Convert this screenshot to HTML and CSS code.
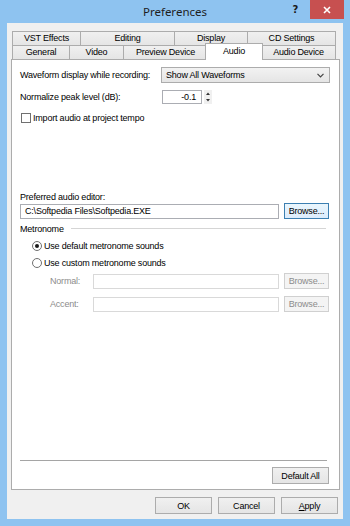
FILE: index.html
```html
<!DOCTYPE html>
<html lang="en">
<head>
  <meta charset="UTF-8">
  <title>Preferences</title>
  <link rel="stylesheet" href="styles.css">
</head>
<body>
  <div class="window">
    <div class="titlebar">
      <span></span>
      <div class="title">Preferences</div>
      <div class="controls">
        <span class="help">?</span>
        <span class="close">
          <svg width="8" height="8" viewBox="0 0 8 8"><path d="M1 1L7 7M7 1L1 7" stroke="#fff" stroke-width="1.6"/></svg>
        </span>
      </div>
    </div>

    <div class="client">
      <div class="tabs">
        <div class="tab-row row-back">
          <div class="tab">VST Effects</div>
          <div class="tab">Editing</div>
          <div class="tab">Display</div>
          <div class="tab">CD Settings</div>
        </div>
        <div class="tab-row row-front">
          <div class="tab">General</div>
          <div class="tab">Video</div>
          <div class="tab">Preview Device</div>
          <div class="tab active">Audio</div>
          <div class="tab">Audio Device</div>
        </div>
      </div>

      <div class="page">
        <div class="field-row">
          <label>Waveform display while recording:</label>
          <div class="combo">
            <span>Show All Waveforms</span>
            <svg width="7" height="5" viewBox="0 0 7 5"><path d="M0.5 0.8L3.5 3.8L6.5 0.8" fill="none" stroke="#444" stroke-width="1.2"/></svg>
          </div>
        </div>
        <div class="field-row spin-row">
          <label>Normalize peak level (dB):</label>
          <div class="spin">
            <div class="spin-input">-0.1</div>
            <div class="spin-arrows">
              <svg width="8" height="14" viewBox="0 0 8 14"><path d="M2 5L4 2.5L6 5Z M2 9L4 11.5L6 9Z" fill="#333"/></svg>
            </div>
          </div>
        </div>
        <div class="check-row">
          <span class="checkbox"></span>
          <span>Import audio at project tempo</span>
        </div>

        <div class="editor-label">Preferred audio editor:</div>
        <div class="path-row">
          <div class="textbox">C:\Softpedia Files\Softpedia.EXE</div>
          <button class="btn focused">Browse...</button>
        </div>

        <div class="group-head">
          <span>Metronome</span>
          <span class="group-line"></span>
        </div>
        <div class="radio-row first">
          <span class="radio checked"></span>
          <span>Use default metronome sounds</span>
        </div>
        <div class="radio-row">
          <span class="radio"></span>
          <span>Use custom metronome sounds</span>
        </div>
        <div class="sound-row">
          <span class="sound-label">Normal:</span>
          <div class="textbox disabled"></div>
          <button class="btn disabled">Browse...</button>
        </div>
        <div class="sound-row second">
          <span class="sound-label">Accent:</span>
          <div class="textbox disabled"></div>
          <button class="btn disabled">Browse...</button>
        </div>

        <div class="page-footer">
          <div class="separator"></div>
          <button class="btn wide">Default All</button>
        </div>
      </div>

      <div class="dialog-buttons">
        <button class="btn wide">OK</button>
        <button class="btn wide">Cancel</button>
        <button class="btn wide"><u>A</u>pply</button>
      </div>
    </div>
  </div>
</body>
</html>
```

FILE: styles.css
```css
body {
  margin: 0;
  font-family: 'Liberation Sans', Arial, sans-serif;
  font-size: 9px;
  letter-spacing: -0.2px;
  color: #000;
}
.window {
  width: 350px;
  height: 526px;
  box-sizing: border-box;
  padding: 0 7px 7px 7px;
  background: #8ec3f0;
  display: flex;
  flex-direction: column;
}
.titlebar {
  height: 23px;
  display: grid;
  grid-template-columns: 1fr auto 1fr;
  align-items: start;
}
.title {
  font-family: 'Noto Sans', sans-serif;
  font-size: 11.5px;
  letter-spacing: 0;
  color: #1e1e1e;
  line-height: 23px;
}
.controls {
  justify-self: end;
  display: flex;
  align-items: start;
  gap: 12px;
  margin-right: -1px;
}
.help {
  font-family: 'DejaVu Sans', sans-serif;
  font-weight: bold;
  font-size: 10px;
  line-height: 19px;
  color: #1a1a1a;
}
.close {
  width: 34px;
  height: 19px;
  background: #c75050;
  display: flex;
  align-items: center;
  justify-content: center;
}
.client {
  flex: 1;
  background: #f0f0f0;
  padding: 8px 3px 5px 4px;
  display: flex;
  flex-direction: column;
}
.tabs {
  margin: 0 4px 0 1px;
}
.tab-row {
  display: grid;
  height: 14px;
}
.row-back {
  grid-template-columns: 68px 94px 73px 1fr;
}
.row-front {
  grid-template-columns: 57px 54px 84px 54px 1fr;
}
.tab {
  border: 1px solid #acacac;
  border-bottom: none;
  margin-right: -1px;
  background: linear-gradient(#f0f0f0, #e5e5e5);
  text-align: center;
  line-height: 13px;
  white-space: nowrap;
}
.tab:last-child {
  margin-right: 0;
}
.tab.active {
  background: #fff;
  margin: -2px -2px -1px -2px;
  line-height: 15px;
  position: relative;
  z-index: 1;
}
.page {
  flex: 1;
  background: #fff;
  border: 1px solid #acacac;
  padding: 7px 10px 5px 8px;
  display: flex;
  flex-direction: column;
}
.field-row {
  display: grid;
  grid-template-columns: 141px 1fr;
  align-items: center;
  height: 16px;
}
.combo {
  height: 16px;
  box-sizing: border-box;
  border: 1px solid #acacac;
  background: linear-gradient(#f2f2f2, #e5e5e5);
  display: flex;
  align-items: center;
  justify-content: space-between;
  padding: 0 5px 0 4px;
  margin-right: -1px;
}
.spin-row {
  margin-top: 7px;
  height: 14px;
}
.spin {
  display: flex;
  gap: 2px;
  margin-left: 1px;
}
.spin-input {
  width: 40px;
  height: 14px;
  box-sizing: border-box;
  border: 1px solid #abadb3;
  text-align: right;
  padding-right: 5px;
  line-height: 12px;
}
.spin-arrows {
  width: 8px;
  height: 14px;
  background: #f0f0f0;
}
.check-row {
  margin-top: 8px;
  display: flex;
  align-items: center;
  gap: 2px;
  height: 11px;
  padding-left: 1px;
}
.checkbox {
  width: 10px;
  height: 10px;
  box-sizing: border-box;
  border: 1px solid #707070;
  background: #fff;
}
.editor-label {
  margin-top: 69px;
  line-height: 11px;
}
.path-row {
  margin-top: 0;
  display: flex;
  align-items: center;
  gap: 5px;
  height: 16px;
}
.textbox {
  flex: 1;
  height: 15px;
  box-sizing: border-box;
  border: 1px solid #abadb3;
  background: #fff;
  padding-left: 4px;
  line-height: 13px;
  white-space: nowrap;
}
.textbox.disabled {
  border-color: #d9d9d9;
}
.btn {
  font: inherit;
  letter-spacing: inherit;
  color: #000;
  width: 45px;
  height: 16px;
  padding: 0;
  border: 1px solid #acacac;
  background: linear-gradient(#f0f0f0, #e5e5e5);
  flex-shrink: 0;
}
.btn.wide {
  width: 57px;
  height: 17px;
}
.btn.focused {
  border-color: #3c7fb1;
  background: linear-gradient(#eaf6fd, #dcecfc);
}
.btn.disabled {
  border-color: #d0d0d0;
  background: #f4f4f4;
  color: #8c8c8c;
}
.group-head {
  margin-top: 4px;
  height: 11px;
  display: flex;
  align-items: center;
  gap: 7px;
}
.group-line {
  flex: 1;
  height: 1px;
  background: #d5d5d5;
  margin-right: 3px;
}
.radio-row {
  margin-top: 6px;
  height: 11px;
  display: flex;
  align-items: center;
  gap: 2px;
  padding-left: 12px;
}
.radio {
  width: 10px;
  height: 10px;
  box-sizing: border-box;
  border: 1px solid #707070;
  border-radius: 50%;
  background: #fff;
  display: flex;
  align-items: center;
  justify-content: center;
}
.radio.checked::after {
  content: '';
  width: 4px;
  height: 4px;
  border-radius: 50%;
  background: #1a1a1a;
}
.sound-row {
  margin-top: 5px;
  height: 16px;
  display: flex;
  align-items: center;
  gap: 5px;
  padding-left: 30px;
}
.sound-row.second {
  margin-top: 7px;
}
.sound-label {
  width: 38px;
  color: #8c8c8c;
}
.page-footer {
  margin-top: auto;
  display: flex;
  flex-direction: column;
  align-items: flex-end;
}
.separator {
  align-self: stretch;
  height: 1px;
  background: #a5a5a5;
  margin-right: 2px;
}
.page-footer .btn {
  margin-top: 6px;
}
.dialog-buttons {
  margin-top: 7px;
  margin-right: 2px;
  display: flex;
  justify-content: flex-end;
  gap: 6px;
}
```
